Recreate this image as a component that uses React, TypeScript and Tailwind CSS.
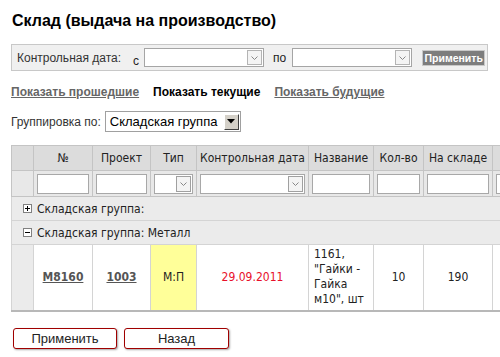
import React from "react";

const cellFont = { fontFamily: '"DejaVu Sans Condensed", "DejaVu Sans", Verdana, sans-serif' };

function FakeSelect({ width }: { width: string }) {
  return (
    <div className={`flex h-[19px] ${width} items-stretch border border-[#a5a5a5] bg-white`}>
      <div className="flex-1" />
      <div className="m-[1px] flex w-[15px] items-center justify-center border border-[#b4b4b4] bg-[#f4f4f4]">
        <svg width="7" height="4" viewBox="0 0 7 4">
          <path d="M0.5 0.5 L3.5 3.5 L6.5 0.5" fill="none" stroke="#888" strokeWidth="1" />
        </svg>
      </div>
    </div>
  );
}

function FilterInput() {
  return <div className="h-[20px] w-full border border-[#a8a8a8] bg-white" />;
}

function FilterSelect() {
  return (
    <div className="flex h-[20px] justify-end border border-[#a8a8a8] bg-white">
      <div className="m-[1px] flex w-[15px] items-center justify-center border border-[#a0a0a0] bg-[#f4f4f4]">
        <svg width="7" height="4" viewBox="0 0 7 4">
          <path d="M0.5 0.5 L3.5 3.5 L6.5 0.5" fill="none" stroke="#888" strokeWidth="1" />
        </svg>
      </div>
    </div>
  );
}

function Toggle({ open }: { open: boolean }) {
  return (
    <span className="inline-flex h-[9px] w-[9px] items-center justify-center border border-[#808080] bg-white">
      <svg width="7" height="7" viewBox="0 0 7 7">
        <path d="M1 3.5 H6" stroke="#000" strokeWidth="1" />
        {!open && <path d="M3.5 1 V6" stroke="#000" strokeWidth="1" />}
      </svg>
    </span>
  );
}

export default function App() {
  const th = "border border-[#c4c4c4] font-normal whitespace-nowrap";
  const td = "border border-[#c4c4c4] px-[3px]";
  const bd = "border border-[#d4d4d4]";

  return (
    <div
      className="h-[357px] w-[500px] overflow-hidden bg-white text-[#222]"
      style={{ fontFamily: '"Liberation Sans", Arial, sans-serif' }}
    >
      <div className="pl-[11px] pt-[11px]">
        {/* заголовок */}
        <h1 className="pl-[1px] text-[16px] font-bold leading-[20px] text-black">
          Склад (выдача на производство)
        </h1>

        {/* фильтр по дате */}
        <div className="mt-[13px] flex h-[27px] w-[477px] items-center border border-[#c8c8c8] bg-[#f0f0f0] pl-[5px] text-[12px]">
          <span className="text-[#333]">Контрольная дата:</span>
          <span className="ml-[12px] mt-[6px]">с</span>
          <div className="ml-[5px]">
            <FakeSelect width="w-[120px]" />
          </div>
          <span className="ml-[9px]">по</span>
          <div className="ml-[6px]">
            <FakeSelect width="w-[120px]" />
          </div>
          <button className="ml-[10px] h-[16px] w-[63px] border border-[#c8c8c8] bg-[#7d7d7d] text-[10.5px] font-bold leading-[14px] text-white">
            Применить
          </button>
        </div>

        {/* переключатели */}
        <div className="mt-[14px] flex gap-[14px] text-[12px] font-bold leading-[14px]">
          <span className="text-[#666] underline">Показать прошедшие</span>
          <span className="text-black">Показать текущие</span>
          <span className="text-[#666] underline">Показать будущие</span>
        </div>

        {/* группировка */}
        <div className="mt-[12px] flex items-center text-[12px]">
          <span className="text-[#333]">Группировка по:</span>
          <div className="ml-[4px] flex h-[21px] w-[136px] items-center border border-[#a0a0a0] bg-white pl-[4px]">
            <span className="flex-1 whitespace-nowrap text-[13px] text-black">Складская группа</span>
            <div className="mr-[1px] flex h-[16px] w-[15px] items-center justify-center border border-t-white border-l-white border-b-[#404040] border-r-[#404040] bg-[#d4d0c8]">
              <svg width="8" height="5" viewBox="0 0 8 5">
                <path d="M0 0 H8 L4 4.5 Z" fill="#000" />
              </svg>
            </div>
          </div>
        </div>

        {/* таблица */}
        <table
          className="mt-[13px] w-[560px] table-fixed border-collapse border border-[#b0b0b0] text-[12px]"
          style={cellFont}
        >
          <colgroup>
            <col className="w-[22px]" />
            <col className="w-[59px]" />
            <col className="w-[58px]" />
            <col className="w-[46px]" />
            <col className="w-[112px]" />
            <col className="w-[65px]" />
            <col className="w-[50px]" />
            <col className="w-[69px]" />
            <col className="w-[79px]" />
          </colgroup>
          <thead>
            <tr className="h-[25px] bg-[#dcdcdc] text-[#222]">
              <th className={th} />
              <th className={th}>№</th>
              <th className={th}>Проект</th>
              <th className={th}>Тип</th>
              <th className={th}>Контрольная дата</th>
              <th className={th}>Название</th>
              <th className={th}>Кол-во</th>
              <th className={th}>На складе</th>
              <th className={th} />
            </tr>
            <tr className="h-[26px] bg-[#e8e8e8]">
              <td className="border border-[#c4c4c4]" />
              <td className={td}><FilterInput /></td>
              <td className={td}><FilterInput /></td>
              <td className={td}><FilterSelect /></td>
              <td className={td}><FilterSelect /></td>
              <td className={td}><FilterInput /></td>
              <td className={td}><FilterInput /></td>
              <td className={td}><FilterInput /></td>
              <td className={td}><FilterInput /></td>
            </tr>
          </thead>
          <tbody>
            <tr className="h-[24px] bg-[#ebebeb]">
              <td colSpan={9} className={`${bd} pl-[11px]`}>
                <div className="flex items-center gap-[5px]">
                  <Toggle open={false} />
                  <span>Складская группа:</span>
                </div>
              </td>
            </tr>
            <tr className="h-[24px] bg-[#ebebeb]">
              <td colSpan={9} className={`${bd} pl-[11px]`}>
                <div className="flex items-center gap-[5px]">
                  <Toggle open={true} />
                  <span>Складская группа: Металл</span>
                </div>
              </td>
            </tr>
            <tr className="h-[66px] border-b-2 border-b-[#b8b8b8] text-center">
              <td className={`${bd} bg-[#ebebeb]`} />
              <td className={`${bd} font-bold text-[#555] underline`}>М8160</td>
              <td className={`${bd} font-bold text-[#555] underline`}>1003</td>
              <td className={`${bd} bg-[#ffff99]`}>М:П</td>
              <td className={`${bd} text-[#e8102a]`}>29.09.2011</td>
              <td className={`${bd} px-[5px] text-left leading-[15px]`}>
                1161, "Гайки - Гайка м10", шт
              </td>
              <td className={bd}>10</td>
              <td className={bd}>190</td>
              <td className={bd} />
            </tr>
          </tbody>
        </table>

        {/* кнопки */}
        <div className="mt-[16px] flex gap-[7px] pl-[2px]">
          <button className="h-[21px] w-[104px] rounded-[3px] border border-[#a00000] bg-white text-[13px] text-[#222] shadow-[1px_1px_2px_rgba(0,0,0,0.35)]">
            Применить
          </button>
          <button className="h-[21px] w-[105px] rounded-[3px] border border-[#a00000] bg-white text-[13px] text-[#222] shadow-[1px_1px_2px_rgba(0,0,0,0.35)]">
            Назад
          </button>
        </div>
      </div>
    </div>
  );
}
